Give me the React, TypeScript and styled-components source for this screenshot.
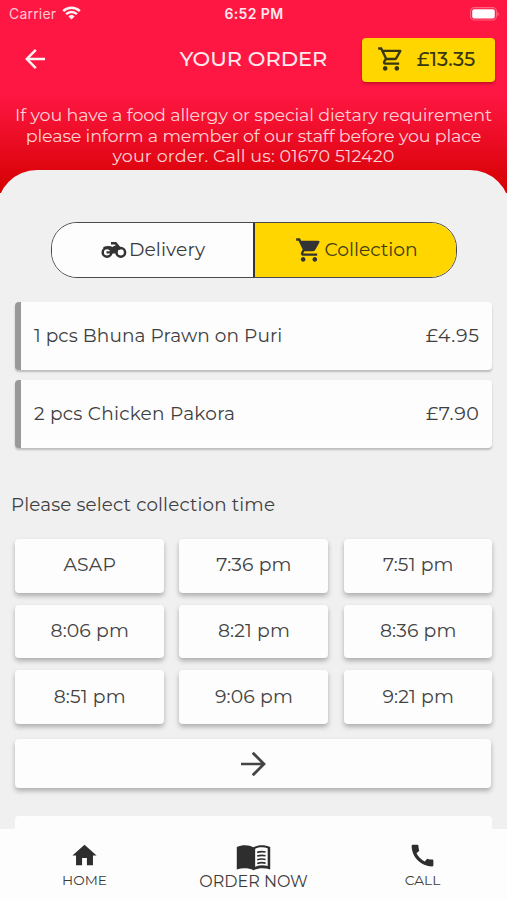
import React from "react";
import styled, { createGlobalStyle } from "styled-components";
import {
  MdCall,
  MdHome,
  MdOutlineShoppingCart,
  MdShoppingCart,
} from "react-icons/md";

const GlobalStyle = createGlobalStyle`
  *, *::before, *::after { box-sizing: border-box; }
  body {
    margin: 0;
    background: #f0f0f0;
    color: #3f3f3f;
    font-family: Montserrat, Inter, "Liberation Sans", sans-serif;
  }
  button { font-family: inherit; color: inherit; border: 0; padding: 0; }
  p, h1, h2 { margin: 0; font-weight: 400; }
`;

const Screen = styled.div`
  display: flex;
  flex-direction: column;
  width: 507px;
  height: 900px;
  overflow: hidden;
`;

const Header = styled.header`
  flex: none;
  height: 193px;
  color: #ffe9ec;
  background: linear-gradient(#ff1744 0, #ff1744 92px, #d50000 193px);
`;

const StatusBar = styled.div`
  display: grid;
  grid-template-columns: 1fr auto 1fr;
  align-items: center;
  height: 28px;
  padding: 0 8px 0 9px;
  line-height: 28px;
  font-family: Inter, "Liberation Sans", sans-serif;
`;

const Carrier = styled.div`
  display: flex;
  align-items: center;
  gap: 6px;
  font-size: 14px;
  letter-spacing: 0.2px;
  color: #ffc9d2;

  svg {
    margin-top: -2px;
  }
`;

const Clock = styled.div`
  font-size: 14px;
  font-weight: 600;
  letter-spacing: 0.4px;
`;

const BatterySlot = styled.div`
  display: flex;
  justify-content: flex-end;
`;

const TitleBar = styled.div`
  display: grid;
  grid-template-columns: 135px 1fr 135px;
  align-items: center;
  height: 63px;
  padding: 0 12px;
`;

const BackButton = styled.button`
  display: flex;
  width: 46px;
  padding: 0 0 1px 12px;
  background: none;
  color: #fff0f2;
`;

const Title = styled.h1`
  padding-bottom: 3px;
  text-align: center;
  font-size: 21px;
  font-weight: 500;
  white-space: nowrap;
`;

const BasketButton = styled.button`
  display: flex;
  align-items: center;
  justify-content: center;
  justify-self: end;
  gap: 12px;
  width: 133px;
  height: 44px;
  padding: 0 5px 1px 0;
  border-radius: 4px;
  background: #ffd600;
  color: #39370f;
  font-size: 19.5px;
  font-weight: 500;
  letter-spacing: 0.1px;
  box-shadow: 0 2px 3px rgba(110, 0, 0, 0.4);
`;

const Notice = styled.div`
  padding-top: 14px;
  text-align: center;
  font-size: 17.5px;
  line-height: 20.7px;
  color: #ffd0d5;
  white-space: nowrap;
`;

const NoticeLine = styled.p<{ $track: number }>`
  letter-spacing: ${(p) => p.$track}px;
`;

const Sheet = styled.main`
  flex: 1;
  min-height: 0;
  margin: -23.5px -3px 0;
  padding: 52.5px 18px 0;
  border-radius: 40px 40px 0 0;
  background: #f0f0f0;
  overflow: hidden;
`;

const Toggle = styled.div`
  display: grid;
  grid-template-columns: 201px 1fr;
  width: 406px;
  height: 56px;
  margin: 0 auto;
  border: 1px solid #4a4a4a;
  border-radius: 26px;
  background: #fdfdfd;
  overflow: hidden;
`;

const ToggleOption = styled.button<{ $active?: boolean }>`
  display: flex;
  align-items: center;
  justify-content: center;
  gap: 2px;
  padding: 0 0 1px 2px;
  font-size: 18.7px;
  font-weight: 450;
  letter-spacing: ${(p) => (p.$active ? -0.05 : 0.1)}px;
  background: ${(p) => (p.$active ? "#ffd600" : "#fdfdfd")};
  color: ${(p) => (p.$active ? "#413c15" : "#3a3a3a")};
  border-left: ${(p) => (p.$active ? "2px solid #333" : "0")};

  svg {
    flex: none;
    color: #333;
  }
`;

const Items = styled.ul`
  display: flex;
  flex-direction: column;
  gap: 9.5px;
  margin: 23.5px 0 0;
  padding: 0;
  list-style: none;
`;

const Item = styled.li`
  display: flex;
  align-items: center;
  justify-content: space-between;
  height: 68.5px;
  padding: 0 12.5px 0 13px;
  border-left: 6px solid #999;
  border-radius: 4px;
  background: #fdfdfd;
  font-size: 18.5px;
  font-weight: 450;
  box-shadow: 0 2px 2px rgba(0, 0, 0, 0.22);
`;

const ItemName = styled.span<{ $track: number }>`
  letter-spacing: ${(p) => p.$track}px;
`;

const ItemPrice = styled.span`
  font-size: 19px;
  letter-spacing: 0.6px;
`;

const SectionTitle = styled.h2`
  margin: 43px 0 0 -4px;
  font-size: 18.3px;
  font-weight: 450;
  line-height: 28px;
  letter-spacing: 0.16px;
`;

const Slots = styled.div`
  display: grid;
  grid-template-columns: repeat(3, 148.5px);
  justify-content: space-between;
  row-gap: 12.2px;
  margin-top: 20px;
`;

const Slot = styled.button`
  height: 53.5px;
  padding: 0 0 2px 1px;
  border-radius: 4px;
  background: #fdfdfd;
  color: #424242;
  font-size: 18.8px;
  letter-spacing: 0.15px;
  box-shadow: 0 3px 5px rgba(0, 0, 0, 0.28);
`;

const MoreButton = styled.button`
  display: flex;
  align-items: center;
  justify-content: center;
  width: 476px;
  height: 48.5px;
  margin-top: 15.5px;
  border-radius: 4px;
  background: #fdfdfd;
  box-shadow: 0 3px 5px rgba(0, 0, 0, 0.28);
`;

const NextCard = styled.div`
  height: 60px;
  margin-top: 28.5px;
  border-radius: 4px;
  background: #fdfdfd;
`;

const Nav = styled.nav`
  display: grid;
  grid-template-columns: repeat(3, 1fr);
  flex: none;
  height: 71.5px;
  background: #fdfdfd;
`;

const NavItem = styled.button<{ $main?: boolean }>`
  display: flex;
  flex-direction: column;
  align-items: center;
  gap: ${(p) => (p.$main ? 1.5 : 0)}px;
  padding-top: ${(p) => (p.$main ? 15 : 12.5)}px;
  background: none;
  font-size: ${(p) => (p.$main ? 16 : 13.7)}px;
  line-height: 20px;
  color: #3c3c3c;

  svg {
    flex: none;
    color: #2e2e2e;
  }
`;

const Wifi = () => (
  <svg width="19" height="14" viewBox="0 0 19 14" fill="none" stroke="#fff0f2" strokeWidth="2.5">
    <path d="M1.2 5.1a11.8 11.8 0 0 1 16.6 0" />
    <path d="M4.1 8.1a7.7 7.7 0 0 1 10.8 0" />
    <path d="M6.4 10.4a4.4 4.4 0 0 1 6.2 0L9.5 13.5Z" fill="#fff0f2" stroke="none" />
  </svg>
);

const Battery = () => (
  <svg width="29" height="14" viewBox="0 0 29 14">
    <rect x="0.6" y="0.6" width="25.8" height="12.4" rx="3.6" fill="none" stroke="#ff6480" strokeWidth="1.1" />
    <rect x="2.2" y="2.2" width="22.6" height="9.2" rx="2" fill="#fff" />
    <path d="M27.4 5v4c.8-.4 1.2-1.1 1.2-2s-.4-1.6-1.2-2Z" fill="#ff7890" />
  </svg>
);

const BackArrow = () => (
  <svg width="22" height="22" viewBox="0 0 22 22" fill="none" stroke="currentColor" strokeWidth="2.5">
    <path d="M21 11H3.500M11.800 1.800 2.800 11l9 9.200" />
  </svg>
);

const NextArrow = () => (
  <svg width="26" height="26" viewBox="0 0 26 26" fill="none" stroke="#444" strokeWidth="2.7">
    <path d="M1 13h22M12.700 1.700 24 13 12.700 24.300" />
  </svg>
);

const Motorcycle = () => (
  <svg width="26" height="18" viewBox="0 0 26 18" fill="none" stroke="#333" strokeWidth="2.5">
    <circle cx="6" cy="11.4" r="4.3" />
    <circle cx="19.8" cy="11.4" r="4.3" />
    <path d="M10 2.2h4.600l5 6" />
    <path d="M2.500 6.900c4.300-1.300 7-1 9 .3l4.200-2.400" strokeWidth="2" />
    <path d="M9 6.800l7.600-2.300 2.200 2.400c-2.400 1.300-3.600 3-3.700 5.600h-4.300c0-2.300-.5-4.200-1.800-5.700Z" fill="#333" stroke="none" />
    <path d="M5.500 11.400h6" strokeWidth="2.2" />
  </svg>
);

const MenuBook = () => (
  <svg width="35" height="27" viewBox="0 0 36 27">
    <path d="M.8 2.700C6.400.2 13.200.2 18 3c4.800-2.800 11.600-2.800 17.200-.3v23.100c-5.600-1.900-12-1.800-17.200.7C12.800 24 6.400 23.900.8 25.800Z" fill="#2e2e2e" />
    <path d="M19.700 4.500c4-1.800 8.700-2 12.900-.5v18.200c-4.300-1.100-8.900-.8-12.900.7Z" fill="#fdfdfd" />
    <path d="M21.800 8.200c2.800-.9 5.700-1 8.600-.3M21.800 12c2.800-.9 5.700-1 8.600-.3M21.800 15.800c2.800-.9 5.700-1 8.600-.3M21.800 19.600c2.800-.9 5.700-1 8.600-.3" fill="none" stroke="#2e2e2e" strokeWidth="1.7" />
  </svg>
);

const notice = [
  { text: "If you have a food allergy or special dietary requirement", track: -0.14 },
  { text: "please inform a member of our staff before you place", track: -0.16 },
  { text: "your order. Call us: 01670 512420", track: 0.14 },
];

const basket = [
  { name: "1 pcs Bhuna Prawn on Puri", price: "£4.95", track: 0.08 },
  { name: "2 pcs Chicken Pakora", price: "£7.90", track: 0.26 },
];

const times = ["ASAP", "7:36 pm", "7:51 pm", "8:06 pm", "8:21 pm", "8:36 pm", "8:51 pm", "9:06 pm", "9:21 pm"];

export default function App() {
  return (
    <>
      <GlobalStyle />
      <Screen>
        <Header>
          <StatusBar>
            <Carrier>Carrier <Wifi /></Carrier>
            <Clock>6:52 PM</Clock>
            <BatterySlot><Battery /></BatterySlot>
          </StatusBar>
          <TitleBar>
            <BackButton aria-label="Back"><BackArrow /></BackButton>
            <Title>YOUR ORDER</Title>
            <BasketButton><MdOutlineShoppingCart size={28} />£13.35</BasketButton>
          </TitleBar>
          <Notice>
            {notice.map((line) => (
              <NoticeLine key={line.text} $track={line.track}>{line.text}</NoticeLine>
            ))}
          </Notice>
        </Header>
        <Sheet>
          <Toggle>
            <ToggleOption><Motorcycle />Delivery</ToggleOption>
            <ToggleOption $active><MdShoppingCart size={28} />Collection</ToggleOption>
          </Toggle>
          <Items>
            {basket.map((item) => (
              <Item key={item.name}>
                <ItemName $track={item.track}>{item.name}</ItemName>
                <ItemPrice>{item.price}</ItemPrice>
              </Item>
            ))}
          </Items>
          <SectionTitle>Please select collection time</SectionTitle>
          <Slots>
            {times.map((time) => (
              <Slot key={time}>{time}</Slot>
            ))}
          </Slots>
          <MoreButton aria-label="More times"><NextArrow /></MoreButton>
          <NextCard />
        </Sheet>
        <Nav>
          <NavItem><MdHome size={29} />HOME</NavItem>
          <NavItem $main><MenuBook />ORDER NOW</NavItem>
          <NavItem><MdCall size={29} />CALL</NavItem>
        </Nav>
      </Screen>
    </>
  );
}
